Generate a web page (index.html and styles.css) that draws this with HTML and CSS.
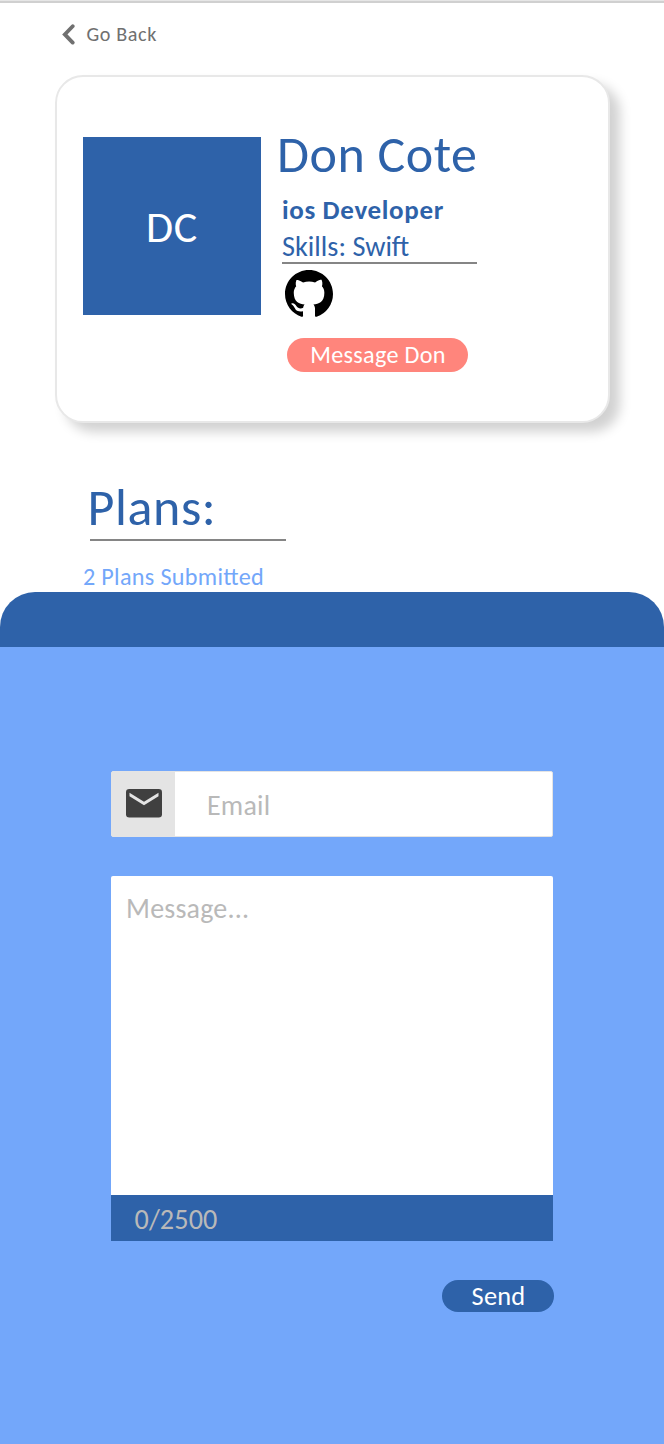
FILE: index.html
```html
<!DOCTYPE html>
<html lang="en">
<head>
<meta charset="utf-8">
<title>Don Cote</title>
<link rel="stylesheet" href="styles.css">
</head>
<body>
<div class="screen">
  <main class="profile">
    <a class="back">
      <svg class="chevron" width="13" height="21" viewBox="0 0 13 21"><path d="M10.7 2.2 2.8 10.4l7.9 8.2" fill="none" stroke="#707070" stroke-width="3.8" stroke-linecap="round"/></svg>
      <span class="back-label">Go Back</span>
    </a>
    <section class="card">
      <div class="avatar"><span class="initials">DC</span></div>
      <div class="details">
        <h1 class="name">Don Cote</h1>
        <p class="role">ios Developer</p>
        <p class="skills">Skills: Swift</p>
        <svg class="github" width="48" height="48" viewBox="0 0 16 16"><path d="M8 0C3.58 0 0 3.58 0 8c0 3.54 2.29 6.53 5.47 7.59.4.07.55-.17.55-.38 0-.19-.01-.82-.01-1.49-2.01.37-2.53-.49-2.69-.94-.09-.23-.48-.94-.82-1.13-.28-.15-.68-.52-.01-.53.63-.01 1.08.58 1.23.82.72 1.21 1.87.87 2.33.66.07-.52.28-.87.51-1.07-1.78-.2-3.64-.89-3.64-3.95 0-.87.31-1.59.82-2.15-.08-.2-.36-1.02.08-2.12 0 0 .67-.21 2.2.82.64-.18 1.32-.27 2-.27s1.36.09 2 .27c1.53-1.04 2.2-.82 2.2-.82.44 1.1.16 1.92.08 2.12.51.56.82 1.27.82 2.15 0 3.07-1.87 3.75-3.65 3.95.29.25.54.73.54 1.48 0 1.07-.01 1.93-.01 2.2 0 .21.15.46.55.38A8.01 8.01 0 0 0 16 8c0-4.42-3.58-8-8-8z"/></svg>
        <button class="message-button"><span class="message-label">Message Don</span></button>
      </div>
    </section>
    <section class="plans">
      <h2 class="plans-title">Plans:</h2>
      <p class="plans-count">2 Plans Submitted</p>
    </section>
  </main>
  <form class="sheet">
    <div class="sheet-header"></div>
    <div class="sheet-body">
      <div class="email-field">
        <div class="email-icon">
          <svg width="36" height="29" viewBox="0 0 36 29"><rect width="36" height="28.6" rx="3.3" fill="#404040"/><path d="M3.5 3.7v3.5L18 16.3l14.5-9.1V3.7L18 12.7z" fill="#e4e4e4"/></svg>
        </div>
        <span class="email-hint">Email</span>
      </div>
      <div class="message-field"><span class="message-hint">Message...</span></div>
      <div class="counter"><span class="counter-text">0/2500</span></div>
      <button class="send" type="button"><span class="send-label">Send</span></button>
    </div>
  </form>
</div>
</body>
</html>
```
FILE: styles.css
```css
* { box-sizing: border-box; }
body, h1, h2, p { margin: 0; }
body { background: #fff; font-family: Carlito, Calibri, Lato, sans-serif; font-feature-settings: "liga" 1; }
h1, h2 { font-weight: 400; }
button { border: 0; font-family: inherit; font-feature-settings: inherit; }
svg { display: block; flex: none; }
span, h1, h2, p { white-space: nowrap; }

.screen {
  display: flex;
  flex-direction: column;
  width: 664px;
  height: 1444px;
  overflow: hidden;
  border-top: 1px solid #e6e6e6;
}
.profile { height: 591px; padding: 15px 54px 0 55px; border-top: 2px solid #d0d0d0; }

.back { display: flex; align-items: center; gap: 11px; height: 33px; padding-left: 7px; }
.back-label { padding-left: .5px; color: #707070; font-size: 20.2px; line-height: 33px; letter-spacing: .6px; }

.card {
  display: flex;
  gap: 17px;
  height: 348px;
  margin-top: 24px;
  padding: 60px 26px 0 26px;
  border: 2px solid #e8e8e8;
  border-radius: 28px;
  background: #fff;
  box-shadow: 10px 9px 12px rgba(0, 0, 0, .18);
}
.avatar {
  display: flex;
  align-items: center;
  justify-content: center;
  width: 178px;
  height: 178px;
  background: #2e62a9;
}
.initials { padding-top: 2px; color: #fff; font-size: 44px; line-height: 48px; letter-spacing: .8px; }
.details { width: 200px; color: #2e62a9; }
.name { margin: -10px 0 0 -1px; font-size: 52px; line-height: 54px; letter-spacing: .5px; }
.role { margin: 11px 0 0 4px; font-size: 27px; font-weight: 700; line-height: 36px; letter-spacing: .65px; }
.skills {
  width: 195px;
  height: 36px;
  margin-left: 4px;
  border-bottom: 2px solid #858585;
  font-size: 28.3px;
  line-height: 37px;
}
.github { margin: 6px 0 0 7px; }
.message-button {
  display: flex;
  align-items: center;
  justify-content: center;
  width: 181px;
  height: 34px;
  margin: 20px 0 0 9px;
  padding: 0;
  border-radius: 17px;
  background: #ff857c;
  color: #fff;
}
.message-label { padding-left: 1px; font-size: 24.2px; line-height: 34px; letter-spacing: .3px; }

.plans { padding: 56px 0 0 28px; }
.plans-title {
  width: 196px;
  height: 62px;
  margin-left: 7px;
  border-bottom: 2px solid #858585;
  color: #2e62a9;
  font-size: 52px;
  line-height: 56px;
  text-indent: -2.5px;
  letter-spacing: .6px;
}
.plans-count { margin-top: 21px; color: #73a7fa; font-size: 24.2px; line-height: 30px; letter-spacing: .3px; }

.sheet { flex: 1; }
.sheet-header { height: 55px; border-radius: 35px 35px 0 0; background: #2e62a9; }
.sheet-body { height: 797px; padding: 124px 111px 0; background: #73a7fa; }
.email-field {
  display: flex;
  align-items: center;
  height: 66px;
  border: 1px solid #e4e4e4;
  border-radius: 2px;
  background: #fff;
}
.email-icon {
  display: flex;
  align-items: center;
  justify-content: center;
  width: 63px;
  height: 64px;
  padding: 0 0 2px;
  background: #e4e4e4;
}
.email-hint, .message-hint { color: #b9b9b9; font-size: 28px; line-height: 36px; letter-spacing: .2px; }
.email-hint { margin-left: 32px; padding-top: 3px; }
.message-field { height: 319px; margin-top: 39px; padding: 15px; border-radius: 2px 2px 0 0; background: #fff; }
.message-hint { display: block; }
.counter { height: 46px; padding-left: 23.5px; background: #2e62a9; color: #b9b9b9; font-size: 28.2px; line-height: 50px; letter-spacing: .1px; }
.send {
  display: flex;
  align-items: center;
  justify-content: center;
  width: 112px;
  height: 32px;
  margin: 39px -.5px 0 auto;
  padding: 0;
  border-radius: 16px;
  background: #2e62a9;
  color: #fff;
}
.send-label { padding-left: 2px; font-size: 26.4px; line-height: 32px; letter-spacing: .2px; }
```
